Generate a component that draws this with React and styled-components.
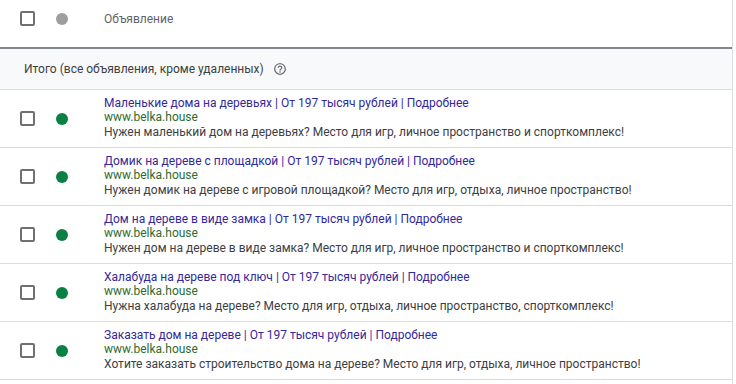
import styled, { createGlobalStyle } from "styled-components";

const Global = createGlobalStyle`
  body {
    margin: 0;
    background: #fff;
    font-family: Roboto, "Noto Sans", Arial, sans-serif;
  }
`

const Table = styled.div`
  width: 732px;
  height: 384px;
  border-right: 1px solid #dadce0;
  overflow: hidden;
`
const HeaderRow = styled.div`
  display: flex;
  align-items: center;
  height: 37px;
  padding-bottom: 10px;
  border-bottom: 2px solid #80868b;
`
const CheckCell = styled.div`
  width: 48px;
  padding-left: 20px;
  box-sizing: border-box;
  display: flex;
  align-items: center;
`
const Checkbox = styled.span`
  width: 15px;
  height: 15px;
  box-sizing: border-box;
  border: 2px solid #707070;
  border-radius: 2px;
`
const DotCell = styled.div`
  width: 56px;
  padding-left: 8px;
  box-sizing: border-box;
  display: flex;
  align-items: center;
`
const Dot = styled.span`
  width: 12px;
  height: 12px;
  border-radius: 50%;
  background: ${p => (p.$on ? "#0b8043" : "#9e9e9e")};
`
const HeadLabel = styled.div`
  font-size: 12px;
  color: #5f6368;
`
const Summary = styled.div`
  display: flex;
  align-items: center;
  gap: 9px;
  height: 40px;
  padding-left: 24px;
  background: #f8f9fa;
  border-bottom: 1px solid #dadce0;
  font-size: 12px;
  color: #3c4043;
`
const Help = styled.svg`
  width: 14px;
  height: 14px;
  fill: #5f6368;
`
const Row = styled.div`
  display: flex;
  align-items: center;
  height: 57px;
  border-bottom: 1px solid #dadce0;
`
const Ad = styled.div`
  display: flex;
  flex-direction: column;
  font-size: 12px;
  line-height: 14.5px;
  white-space: nowrap;
  margin-top: -2px;
`
const Title = styled.span`
  color: #33289a;
`
const Url = styled.span`
  color: #2f6b2f;
`
const Desc = styled.span`
  color: #3c4043;
`

const ads = [
  ["Маленькие дома на деревьях", "Нужен маленький дом на деревьях? Место для игр, личное пространство и спорткомплекс!"],
  ["Домик на дереве с площадкой", "Нужен домик на дереве с игровой площадкой? Место для игр, отдыха, личное пространство!"],
  ["Дом на дереве в виде замка", "Нужен дом на дереве в виде замка? Место для игр, личное пространство и спорткомплекс!"],
  ["Халабуда на дереве под ключ", "Нужна халабуда на дереве? Место для игр, отдыха, личное пространство, спорткомплекс!"],
  ["Заказать дом на дереве", "Хотите заказать строительство дома на дереве? Место для игр, отдыха, личное пространство!"],
];

const App = () => {
  return (
    <Table>
      <Global />
      <HeaderRow>
        <CheckCell><Checkbox /></CheckCell>
        <DotCell><Dot /></DotCell>
        <HeadLabel>Объявление</HeadLabel>
      </HeaderRow>
      <Summary>
        Итого (все объявления, кроме удаленных)
        <Help viewBox="0 0 24 24">
          <path d="M11 18h2v-2h-2v2zm1-16C6.48 2 2 6.48 2 12s4.48 10 10 10 10-4.48 10-10S17.52 2 12 2zm0 18c-4.41 0-8-3.59-8-8s3.59-8 8-8 8 3.59 8 8-3.59 8-8 8zm0-14c-2.21 0-4 1.79-4 4h2c0-1.1.9-2 2-2s2 .9 2 2c0 2-3 1.750-3 5h2c0-2.25 3-2.5 3-5 0-2.21-1.79-4-4-4z" />
        </Help>
      </Summary>
      {ads.map(([title, desc]) => (
        <Row key={title}>
          <CheckCell><Checkbox /></CheckCell>
          <DotCell><Dot $on /></DotCell>
          <Ad>
            <Title>{title} | От 197 тысяч рублей | Подробнее</Title>
            <Url>www.belka.house</Url>
            <Desc>{desc}</Desc>
          </Ad>
        </Row>
      ))}
    </Table>
  );
};

export default App;
